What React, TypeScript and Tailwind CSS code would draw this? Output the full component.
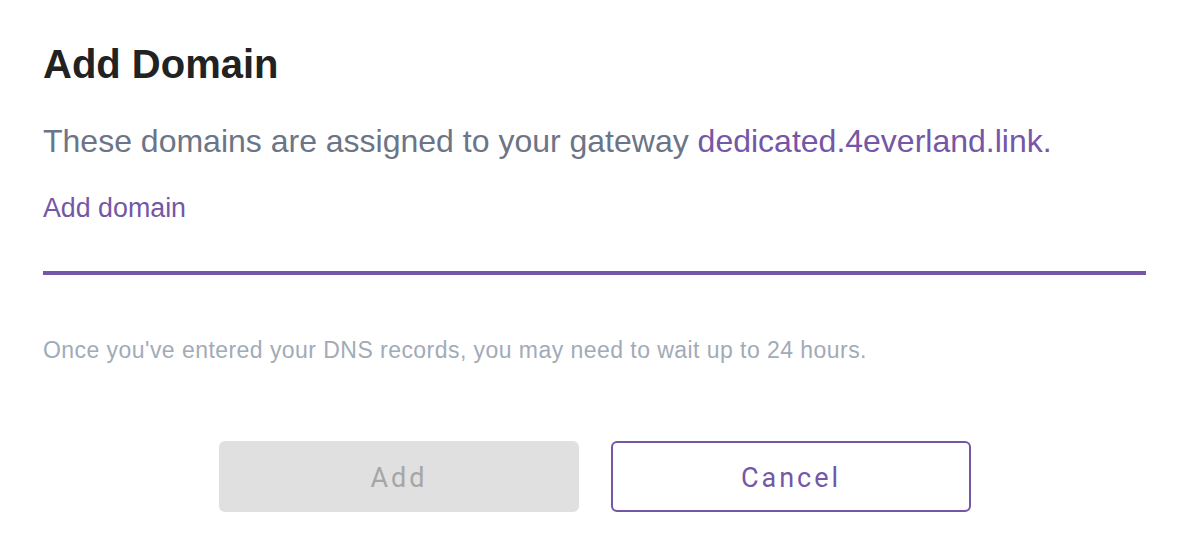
export default function App() {
  return (
    <div className="w-[1186px] h-[558px] bg-white font-['Liberation_Sans',Arial,sans-serif]">
      <div className="pl-[43px] pr-[40px] pt-[40px]">
        <h1 className="text-[40px] leading-[48px] font-bold text-[#222222]">Add Domain</h1>
        <p className="mt-[33px] text-[32px] leading-[40px] text-[#6b7587]">
          These domains are assigned to your gateway{" "}
          <span className="text-[#7457a6]">dedicated.4everland.link.</span>
        </p>
        <label className="block mt-[31px] text-[26.8px] leading-[32px] text-[#7457a6]">Add domain</label>
        <div className="mt-[47px] h-[4px] bg-[#7457a6]" />
        <p className="mt-[61px] text-[23px] leading-[28px] tracking-[0.45px] text-[#a1abb8]">
          Once you've entered your DNS records, you may need to wait up to 24 hours.
        </p>
      </div>
      <div className="mt-[77px] flex justify-center gap-[32px] pl-[4px]">
        <button
          disabled
          className="w-[360px] h-[71px] pt-[4px] rounded-[6px] bg-[#e0e0e0] text-[#a6a6a6] text-[27px] tracking-[3px] font-['Roboto',sans-serif]"
        >
          Add
        </button>
        <button className="w-[360px] h-[71px] pt-[4px] rounded-[6px] border-2 border-[#7457a6] bg-white text-[#7457a6] text-[27px] tracking-[3px] font-['Roboto',sans-serif]">
          Cancel
        </button>
      </div>
    </div>
  );
}
